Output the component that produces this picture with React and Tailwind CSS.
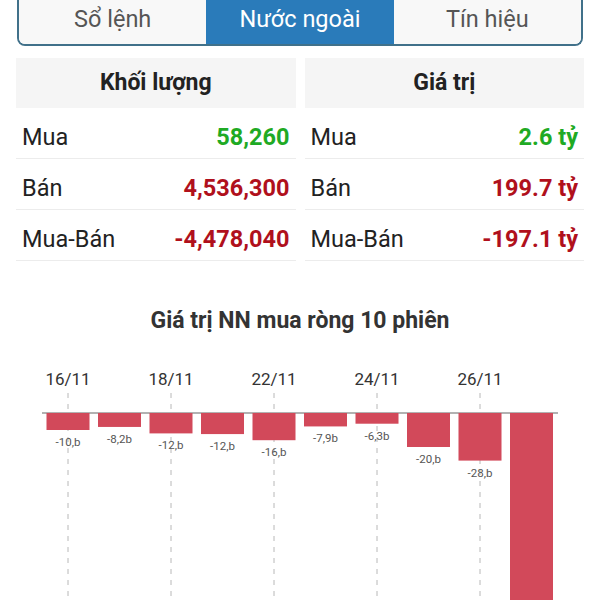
import React from 'react';

const tabs = ['Sổ lệnh', 'Nước ngoài', 'Tín hiệu'];

const volumeRows = [
  { label: 'Mua', value: '58,260', up: true },
  { label: 'Bán', value: '4,536,300' },
  { label: 'Mua-Bán', value: '-4,478,040' },
];

const valueRows = [
  { label: 'Mua', value: '2.6 tỷ', up: true },
  { label: 'Bán', value: '199.7 tỷ' },
  { label: 'Mua-Bán', value: '-197.1 tỷ' },
];

// net foreign buy, last 10 sessions (billions); last bar runs off screen
const sessions = [
  { v: 10, label: '-10,b' },
  { v: 8.2, label: '-8,2b' },
  { v: 12, label: '-12,b' },
  { v: 12.4, label: '-12,b' },
  { v: 16, label: '-16,b' },
  { v: 7.9, label: '-7,9b' },
  { v: 6.3, label: '-6,3b' },
  { v: 20, label: '-20,b' },
  { v: 28, label: '-28,b' },
  { v: 140, label: '' },
];

const dates = ['16/11', '18/11', '22/11', '24/11', '26/11'];

function StatTable({ title, rows }) {
  return (
    <div className="flex flex-col">
      <div className="h-[50px] bg-[#f5f5f5] flex items-center justify-center text-[23px] font-bold text-[#222]">
        {title}
      </div>
      {rows.map((r) => (
        <div key={r.label} className="h-[51px] border-b border-[#ececec] flex items-center justify-between pt-[10px] px-[6px]">
          <span className="text-[23.5px] text-[#222]">{r.label}</span>
          <span className={`text-[23.5px] font-bold ${r.up ? 'text-[#1faa24]' : 'text-[#b0101c]'}`}>{r.value}</span>
        </div>
      ))}
    </div>
  );
}

function NetChart() {
  const base = 62;
  const scale = 1.7;
  return (
    <svg width="600" height="250" className="block" style={{ fontFamily: 'Roboto, sans-serif' }}>
      {dates.map((d, i) => {
        const x = 68 + i * 103;
        return (
          <g key={d}>
            <text x={x} y={34} textAnchor="middle" fontSize="17" fill="#333">{d}</text>
            <line x1={x} y1={42} x2={x} y2={250} stroke="#b8b8b8" strokeWidth="1" strokeDasharray="5 6" />
          </g>
        );
      })}
      <line x1={42} y1={base} x2={558} y2={base} stroke="#999" strokeWidth="1.5" />
      {sessions.map((s, i) => {
        const cx = 68 + i * 51.5;
        const h = s.v * scale;
        return (
          <g key={i}>
            <rect x={cx - 21.5} y={base} width={43} height={h} fill="#d2495a" />
            {s.label && (
              <text x={cx} y={base + h + 16} textAnchor="middle" fontSize="11.5" fill="#555">{s.label}</text>
            )}
          </g>
        );
      })}
    </svg>
  );
}

export default function App() {
  return (
    <div className="w-[600px] h-[600px] overflow-hidden bg-white" style={{ fontFamily: 'Roboto, "Noto Sans", sans-serif' }}>
      {/* tab switcher */}
      <div className="ml-[17px] w-[566px] h-[46px] flex border-2 border-t-0 border-[#41718a] rounded-b-[8px] overflow-hidden">
        {tabs.map((t) => (
          <div
            key={t}
            className={`flex-1 flex items-center justify-center pb-[4px] text-[23.5px] ${
              t === 'Nước ngoài' ? 'bg-[#2a7bba] text-white' : 'bg-[#f8f8f8] text-[#555]'
            }`}
          >
            {t}
          </div>
        ))}
      </div>

      {/* volume / value tables */}
      <div className="mt-[12px] ml-[16px] w-[568px] grid grid-cols-2 gap-[9px]">
        <StatTable title="Khối lượng" rows={volumeRows} />
        <StatTable title="Giá trị" rows={valueRows} />
      </div>

      <div className="mt-[45px] text-center text-[23px] font-bold text-[#333] leading-[30px]">
        Giá trị NN mua ròng 10 phiên
      </div>
      <div className="mt-[15px]">
        <NetChart />
      </div>
    </div>
  );
}
